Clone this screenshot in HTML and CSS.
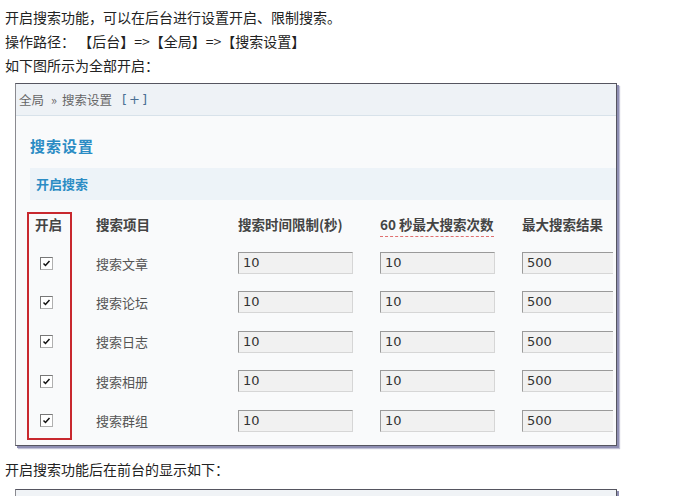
FILE: index.html
```html
<!DOCTYPE html>
<html lang="zh-CN">
<head>
<meta charset="utf-8">
<title>搜索设置</title>
<link rel="stylesheet" href="styles.css">
</head>
<body>
<p class="line">开启搜索功能，可以在后台进行设置开启、限制搜索。</p>
<p class="line">操作路径：&nbsp;【后台】=&gt;【全局】=&gt;【搜索设置】</p>
<p class="line">如下图所示为全部开启：</p>

<div class="shot">
  <div class="crumb"><span>全局</span><span class="sep">»</span><span>搜索设置</span><span class="plus">[+]</span></div>
  <div class="panel">
    <h2 class="title">搜索设置</h2>
    <div class="section">开启搜索</div>
  </div>
  <div class="grid">
    <div class="redbox"></div>
    <div class="cell head c1">开启</div>
    <div class="cell head">搜索项目</div>
    <div class="cell head">搜索时间限制(秒)</div>
    <div class="cell head"><span class="dash">60 秒最大搜索次数</span></div>
    <div class="cell head">最大搜索结果</div>

    <div class="cell chk"><span class="box"><svg viewBox="0 0 11 11" width="11" height="11"><path d="M2.5 5.5 L4.5 7.5 L8.5 3" fill="none" stroke="#111" stroke-width="1.5"/></svg></span></div>
    <div class="cell item">搜索文章</div>
    <div class="cell"><span class="inp">10</span></div>
    <div class="cell"><span class="inp">10</span></div>
    <div class="cell"><span class="inp">500</span></div>

    <div class="cell chk"><span class="box"><svg viewBox="0 0 11 11" width="11" height="11"><path d="M2.5 5.5 L4.5 7.5 L8.5 3" fill="none" stroke="#111" stroke-width="1.5"/></svg></span></div>
    <div class="cell item">搜索论坛</div>
    <div class="cell"><span class="inp">10</span></div>
    <div class="cell"><span class="inp">10</span></div>
    <div class="cell"><span class="inp">500</span></div>

    <div class="cell chk"><span class="box"><svg viewBox="0 0 11 11" width="11" height="11"><path d="M2.5 5.5 L4.5 7.5 L8.5 3" fill="none" stroke="#111" stroke-width="1.5"/></svg></span></div>
    <div class="cell item">搜索日志</div>
    <div class="cell"><span class="inp">10</span></div>
    <div class="cell"><span class="inp">10</span></div>
    <div class="cell"><span class="inp">500</span></div>

    <div class="cell chk"><span class="box"><svg viewBox="0 0 11 11" width="11" height="11"><path d="M2.5 5.5 L4.5 7.5 L8.5 3" fill="none" stroke="#111" stroke-width="1.5"/></svg></span></div>
    <div class="cell item">搜索相册</div>
    <div class="cell"><span class="inp">10</span></div>
    <div class="cell"><span class="inp">10</span></div>
    <div class="cell"><span class="inp">500</span></div>

    <div class="cell chk"><span class="box"><svg viewBox="0 0 11 11" width="11" height="11"><path d="M2.5 5.5 L4.5 7.5 L8.5 3" fill="none" stroke="#111" stroke-width="1.5"/></svg></span></div>
    <div class="cell item">搜索群组</div>
    <div class="cell"><span class="inp">10</span></div>
    <div class="cell"><span class="inp">10</span></div>
    <div class="cell"><span class="inp">500</span></div>
  </div>
</div>

<p class="line after">开启搜索功能后在前台的显示如下：</p>

<div class="shot2"></div>
</body>
</html>
```

FILE: styles.css
```css
html, body {
  margin: 0;
  padding: 0;
  background: #ffffff;
}
body {
  padding: 5px 0 0 5px;
  font-family: "Noto Sans CJK SC", "Liberation Sans", sans-serif;
  color: #222;
  overflow: hidden;
  height: 496px;
  box-sizing: border-box;
}
.line {
  margin: 0;
  font-size: 14px;
  line-height: 24px;
  height: 24px;
}
.shot {
  margin: 6px 0 0 10px;
  width: 600px;
  height: 361px;
  border: 1px solid #555560;
  border-left-color: #8a8a90;
  background: #f9fafb;
  box-shadow: 2px 2px 0 #8e8eb2, 3px 3px 1px #c0c0d6;
  overflow: hidden;
}
.crumb {
  display: flex;
  height: 31px;
  line-height: 31px;
  padding-left: 3px;
  font-size: 12.5px;
  color: #666;
  background: #eef2f6;
  border-bottom: 1px solid #d8e2ea;
}
.sep {
  margin: 0 5px 0 7px;
}
.plus {
  margin-left: 10px;
  letter-spacing: 2px;
  color: #4a6f94;
  font-family: "DejaVu Sans", sans-serif;
  font-size: 13px;
}
.panel {
  padding-left: 14px;
}
.title {
  margin: 0;
  padding-top: 20px;
  height: 52px;
  box-sizing: border-box;
  line-height: 20px;
  font-size: 15px;
  letter-spacing: 1px;
  font-weight: bold;
  color: #2b8cc4;
}
.section {
  height: 32px;
  line-height: 32px;
  padding-left: 6px;
  font-size: 13px;
  font-weight: bold;
  color: #2b8cc4;
  background: #edf3f8;
}
.grid {
  display: grid;
  grid-template-columns: 69px 142px 142px 142px 91px;
  grid-auto-rows: 39.4px;
  padding: 4px 0 0 11px;
  overflow: hidden;
}
.redbox {
  grid-column: 1;
  grid-row: 1 / span 6;
  width: 45px;
  margin-top: 8px;
  border: 2px solid #c8282e;
  box-sizing: border-box;
}
.cell {
  display: flex;
  align-items: center;
  font-size: 13px;
  white-space: nowrap;
  overflow: hidden;
}
.head {
  font-weight: bold;
  font-size: 13.5px;
  color: #444;
}
.c1 {
  grid-column: 1;
  grid-row: 1;
  padding-left: 8px;
}
.chk {
  padding-left: 13px;
}
.grid > .cell:nth-child(7),
.grid > .cell:nth-child(12),
.grid > .cell:nth-child(17),
.grid > .cell:nth-child(22),
.grid > .cell:nth-child(27) {
  grid-column: 1;
}
.grid > .cell:nth-child(7) { grid-row: 2; }
.grid > .cell:nth-child(12) { grid-row: 3; }
.grid > .cell:nth-child(17) { grid-row: 4; }
.grid > .cell:nth-child(22) { grid-row: 5; }
.grid > .cell:nth-child(27) { grid-row: 6; }
.item {
  color: #555;
}
.dash {
  border-bottom: 1px dashed #e07070;
  padding-bottom: 2px;
  margin-top: 4px;
}
.box {
  display: block;
  width: 11px;
  height: 11px;
  background: #fff;
  border: 1px solid #b0b0b0;
  border-top-color: #777;
  border-left-color: #777;
}
.box svg {
  display: block;
}
.inp {
  display: block;
  width: 115px;
  height: 22px;
  box-sizing: border-box;
  line-height: 20px;
  padding-left: 4px;
  font-family: "DejaVu Sans", "Liberation Sans", sans-serif;
  font-size: 13px;
  color: #333;
  background: #f1f1f1;
  border: 1px solid #d6d6d6;
  border-top-color: #9a9a9a;
  border-left-color: #9a9a9a;
  flex: none;
}
.after {
  margin-top: 11px;
}
.shot2 {
  margin: 8px 0 0 10px;
  width: 600px;
  height: 6px;
  border: 1px solid #555560;
  border-bottom: none;
  border-left-color: #8a8a90;
  background: #f0f3f6;
  box-shadow: 2px 2px 0 #8e8eb2;
}
```
